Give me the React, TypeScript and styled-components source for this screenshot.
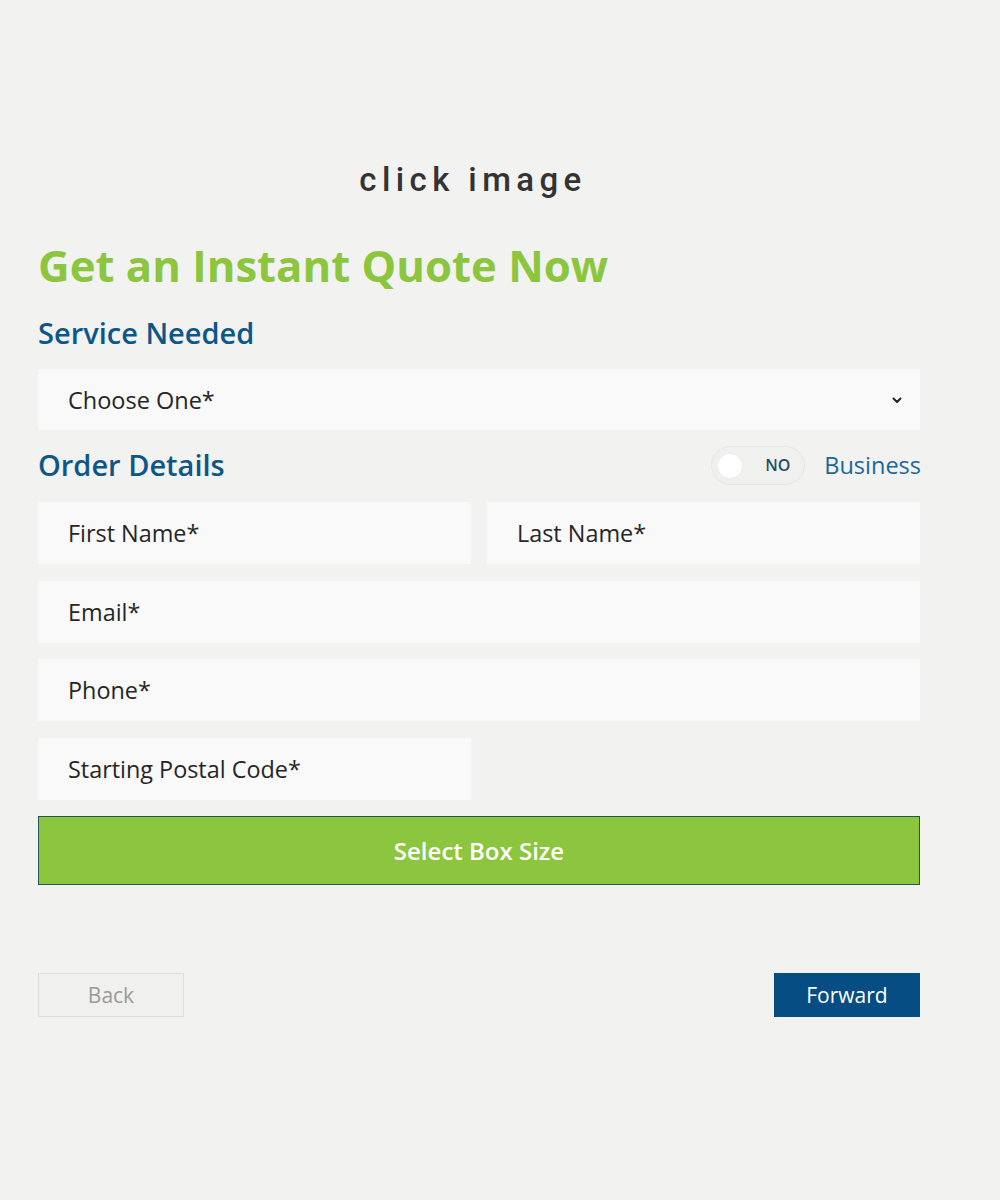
import React, { useState } from "react";
import styled, { createGlobalStyle } from "styled-components";

const GlobalStyle = createGlobalStyle`
  html, body {
    margin: 0;
    padding: 0;
    background: #f2f2f0;
  }
  body {
    font-family: "Open Sans", "Liberation Sans", sans-serif;
  }
`;

const colors = {
  green: "#8cc63e",
  blue: "#0d5788",
  navy: "#054d83",
  text: "#262626",
  field: "#f8f9f8",
};

const Page = styled.div`
  width: 1000px;
  min-height: 1200px;
  padding: 160px 80px 0 38px;
  box-sizing: border-box;
`;

const Banner = styled.div`
  width: 882px;
  padding-right: 12px;
  box-sizing: border-box;
  text-align: center;
  font-family: Roboto, "Liberation Sans", sans-serif;
  font-weight: 500;
  font-size: 33px;
  letter-spacing: 5.4px;
  color: #333;
  line-height: 40px;
`;

const Heading = styled.h1`
  margin: 37px 0 0;
  font-size: 43.7px;
  line-height: 56px;
  font-weight: 700;
  color: ${colors.green};
`;

const SectionTitle = styled.h3`
  margin: 0;
  font-size: 29px;
  line-height: 36px;
  font-weight: 600;
  color: ${colors.blue};
`;

const Form = styled.form`
  width: 882px;
  display: flex;
  flex-direction: column;
`;

const ServiceTitle = styled(SectionTitle)`
  margin-top: 22px;
`;

const SelectBox = styled.div`
  margin-top: 18px;
  height: 61px;
  background: ${colors.field};
  display: flex;
  align-items: center;
  justify-content: space-between;
  padding: 0 16px 0 30px;
  font-size: 23.5px;
  color: ${colors.text};
`;

const HeaderRow = styled.div`
  margin-top: 16px;
  display: flex;
  align-items: center;
  justify-content: space-between;
  height: 38px;
`;

const ToggleGroup = styled.div`
  display: flex;
  align-items: center;
  gap: 19px;
`;

const Switch = styled.button<{ $on: boolean }>`
  width: 94px;
  height: 39px;
  border-radius: 20px;
  border: 1px solid #e6e6e6;
  background: ${(p) => (p.$on ? colors.green : "#f0f0ef")};
  position: relative;
  padding: 0 14px 0 0;
  display: flex;
  align-items: center;
  justify-content: flex-end;
  font-family: inherit;
  font-size: 16px;
  font-weight: 600;
  color: #1f4d6e;
  cursor: pointer;
  box-sizing: border-box;
`;

const Knob = styled.span`
  position: absolute;
  left: 6px;
  top: 7px;
  width: 24px;
  height: 24px;
  border-radius: 50%;
  background: #fff;
  box-shadow: 0 0 2px rgba(0, 0, 0, 0.06);
`;

const BusinessLabel = styled.span`
  font-size: 23.5px;
  color: #1a679c;
  margin-right: -1px;
`;

const FieldGrid = styled.div`
  margin-top: 18px;
  display: grid;
  grid-template-columns: 1fr 1fr;
  grid-auto-rows: 62px;
  column-gap: 16px;
  row-gap: 16.5px;
`;

const Field = styled.input<{ $wide?: boolean }>`
  grid-column: ${(p) => (p.$wide ? "1 / span 2" : "auto")};
  height: 100%;
  border: none;
  outline: none;
  background: ${colors.field};
  padding: 0 30px;
  font-family: inherit;
  font-size: 23.4px;
  color: ${colors.text};
  box-sizing: border-box;
  &::placeholder {
    color: ${colors.text};
  }
`;

const SubmitButton = styled.button`
  margin-top: 16.5px;
  height: 69px;
  background: ${colors.green};
  border: 1px solid #1e5a52;
  color: #fff;
  font-family: inherit;
  font-size: 24px;
  font-weight: 600;
  cursor: pointer;
`;

const NavRow = styled.div`
  margin-top: 88px;
  display: flex;
  justify-content: space-between;
`;

const NavButton = styled.button<{ $primary?: boolean }>`
  width: 146px;
  height: 44px;
  font-family: inherit;
  font-size: 21px;
  border: 1px solid ${(p) => (p.$primary ? colors.navy : "#dedede")};
  background: ${(p) => (p.$primary ? colors.navy : "#f0f0ef")};
  color: ${(p) => (p.$primary ? "#fff" : "#9a9a9a")};
  cursor: pointer;
`;

const Chevron = () => (
  <svg width="14" height="14" viewBox="0 0 14 14" fill="none">
    <path d="M3.5 5.5l3.5 3.5 3.5-3.5" stroke="#222" strokeWidth="2" strokeLinecap="round" strokeLinejoin="round" />
  </svg>
);

export default function App() {
  const [business, setBusiness] = useState(false);

  return (
    <>
      <GlobalStyle />
      <Page>
        <Banner>click image</Banner>
        <Heading>Get an Instant Quote Now</Heading>
        <Form onSubmit={(e) => e.preventDefault()}>
          <ServiceTitle>Service Needed</ServiceTitle>
          <SelectBox>
            <span>Choose One*</span>
            <Chevron />
          </SelectBox>
          <HeaderRow>
            <SectionTitle>Order Details</SectionTitle>
            <ToggleGroup>
              <Switch type="button" $on={business} onClick={() => setBusiness(!business)}>
                <Knob />
                {business ? "YES" : "NO"}
              </Switch>
              <BusinessLabel>Business</BusinessLabel>
            </ToggleGroup>
          </HeaderRow>
          <FieldGrid>
            <Field placeholder="First Name*" />
            <Field placeholder="Last Name*" />
            <Field $wide placeholder="Email*" />
            <Field $wide placeholder="Phone*" />
            <Field placeholder="Starting Postal Code*" />
          </FieldGrid>
          <SubmitButton type="submit">Select Box Size</SubmitButton>
          <NavRow>
            <NavButton type="button">Back</NavButton>
            <NavButton type="button" $primary>
              Forward
            </NavButton>
          </NavRow>
        </Form>
      </Page>
    </>
  );
}
